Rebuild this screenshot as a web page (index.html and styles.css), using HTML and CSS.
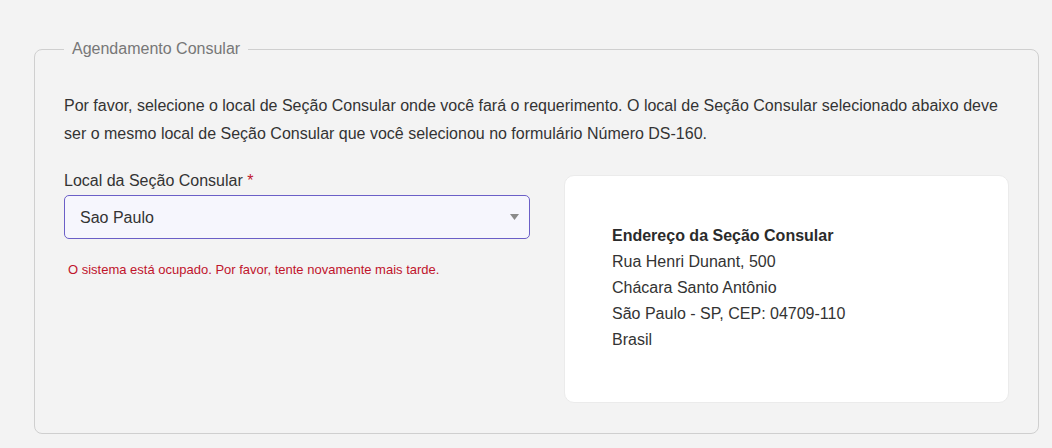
FILE: index.html
```html
<!DOCTYPE html>
<html lang="pt">
<head>
    <meta charset="UTF-8">
    <meta name="viewport" content="width=device-width, initial-scale=1.0">
    <title>Agendamento Consular</title>
    <link rel="stylesheet" href="styles.css">
</head>
<body>

    <fieldset class="panel">
        <legend>Agendamento Consular</legend>

        <p class="intro">Por favor, selecione o local de Seção Consular onde você fará o requerimento. O local de Seção Consular selecionado abaixo deve ser o mesmo local de Seção Consular que você selecionou no formulário Número DS-160.</p>

        <div class="columns">
            <div class="field">
                <label for="post-select">Local da Seção Consular <span class="required">*</span></label>
                <div class="select-wrap">
                    <select id="post-select">
                        <option>Sao Paulo</option>
                        <option>Rio de Janeiro</option>
                        <option>Brasilia</option>
                        <option>Recife</option>
                        <option>Porto Alegre</option>
                    </select>
                    <svg class="caret" width="9" height="6" viewBox="0 0 9 6"><path d="M0 0h9L4.5 6z" fill="#8a8a8a"/></svg>
                </div>
                <p class="error">O sistema está ocupado. Por favor, tente novamente mais tarde.</p>
            </div>

            <div class="address">
                <strong>Endereço da Seção Consular</strong>
                <span>Rua Henri Dunant, 500</span>
                <span>Chácara Santo Antônio</span>
                <span>São Paulo - SP, CEP: 04709-110</span>
                <span>Brasil</span>
            </div>
        </div>
    </fieldset>

</body>
</html>
```

FILE: styles.css
```css
html, body {
    margin: 0;
    background-color: #f3f3f3;
    font-family: 'Liberation Sans', Arial, sans-serif;
    color: #333333;
}

body {
    padding: 40px 13px 0 34px;
}

.panel {
    margin: 0;
    padding: 14px 29px 30px 29px;
    border: 1px solid #cfcfcf;
    border-radius: 8px;
}

.panel legend {
    padding: 0 8px;
    color: #777777;
    font-size: 16px;
}

.intro {
    margin: 20px 0 24px 0;
    font-size: 16px;
    line-height: 28px;
}

.columns {
    display: grid;
    grid-template-columns: 466px 1fr;
    column-gap: 34px;
}

.field label {
    display: block;
    font-size: 16px;
    line-height: 18px;
    margin-bottom: 5px;
}

.required {
    color: #c0142c;
}

.select-wrap {
    position: relative;
}

.select-wrap select {
    width: 100%;
    height: 44px;
    padding: 0 40px 0 15px;
    border: 1px solid #6b5fc7;
    border-radius: 5px;
    background-color: #f6f6fd;
    color: #333333;
    font-family: inherit;
    font-size: 16px;
    appearance: none;
    -webkit-appearance: none;
    outline: none;
}

.caret {
    position: absolute;
    right: 11px;
    top: 19px;
    pointer-events: none;
}

.error {
    margin: 23px 0 0 4px;
    color: #c0142c;
    font-size: 13px;
}

.address {
    display: flex;
    flex-direction: column;
    margin-top: 3px;
    padding: 47px 47px 49px 47px;
    background-color: #ffffff;
    border: 1px solid #ebebeb;
    border-radius: 10px;
    font-size: 16px;
    line-height: 26px;
}

.address strong {
    color: #2b2b2b;
}
```
